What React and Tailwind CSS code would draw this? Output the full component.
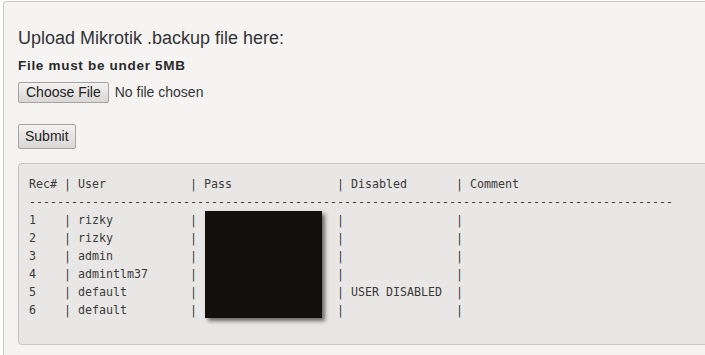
import React from 'react';

const sans = { fontFamily: '"Liberation Sans", Arial, sans-serif' };
const mono = { fontFamily: '"DejaVu Sans Mono", Consolas, monospace' };

const users = [
  { rec: '1', user: 'rizky', disabled: '' },
  { rec: '2', user: 'rizky', disabled: '' },
  { rec: '3', user: 'admin', disabled: '' },
  { rec: '4', user: 'admintlm37', disabled: '' },
  { rec: '5', user: 'default', disabled: 'USER DISABLED' },
  { rec: '6', user: 'default', disabled: '' },
];

// builds one row of the plain text table
function row(rec, user, pass, disabled, comment) {
  return (
    rec.padEnd(5) + '| ' + user.padEnd(16) + '| ' + pass.padEnd(19) + '| ' + disabled.padEnd(15) + '| ' + comment
  );
}

export default function App() {
  const lines = [
    row('Rec#', 'User', 'Pass', 'Disabled', 'Comment'),
    '-'.repeat(92),
    ...users.map(u => row(u.rec, u.user, '', u.disabled, '')),
    ' ',
  ];

  return (
    <div className="w-[705px] h-[355px] overflow-hidden bg-white">
      <div
        className="ml-[3px] mt-[1px] w-[740px] h-[380px] border border-[#cbc9c4] rounded-tl-[3px] bg-[#f5f4f3] pl-[14px] pt-[27px] text-[#333]"
        style={sans}
      >
        <h1 className="text-[18px] leading-none font-normal text-[#333]">Upload Mikrotik .backup file here:</h1>

        <p className="mt-[12px] text-[13.5px] leading-none font-bold tracking-[0.7px] text-[#2a2a2a]">File must be under 5MB</p>

        <div className="mt-[9px] flex items-center gap-[6px]">
          <button className="h-[21px] px-[7px] text-[14px] leading-none text-[#222] border border-[#a3a3a3] rounded-[2px] bg-gradient-to-b from-[#f3f2f1] to-[#d9d7d5]">
            Choose File
          </button>
          <span className="text-[14px] text-[#333]">No file chosen</span>
        </div>

        <button className="mt-[21px] block h-[25px] px-[6px] text-[14px] leading-none text-[#222] border border-[#a3a3a3] rounded-[2px] bg-gradient-to-b from-[#f3f2f1] to-[#d9d7d5]">
          Submit
        </button>

        <div className="relative mt-[14px] w-[720px] border border-[#c6c4c1] rounded-[4px] bg-[#e9e7e5] pl-[10px] pt-[11px] pb-[7px]">
          <pre className="text-[11.63px] leading-[18px] text-[#3a3a3a]" style={mono}>
            {lines.join('\n')}
          </pre>
          <div className="absolute left-[186px] top-[47px] w-[117px] h-[107px] bg-[#130f0d] shadow-[3px_3px_4px_rgba(0,0,0,0.55)]" />
        </div>
      </div>
    </div>
  );
}
